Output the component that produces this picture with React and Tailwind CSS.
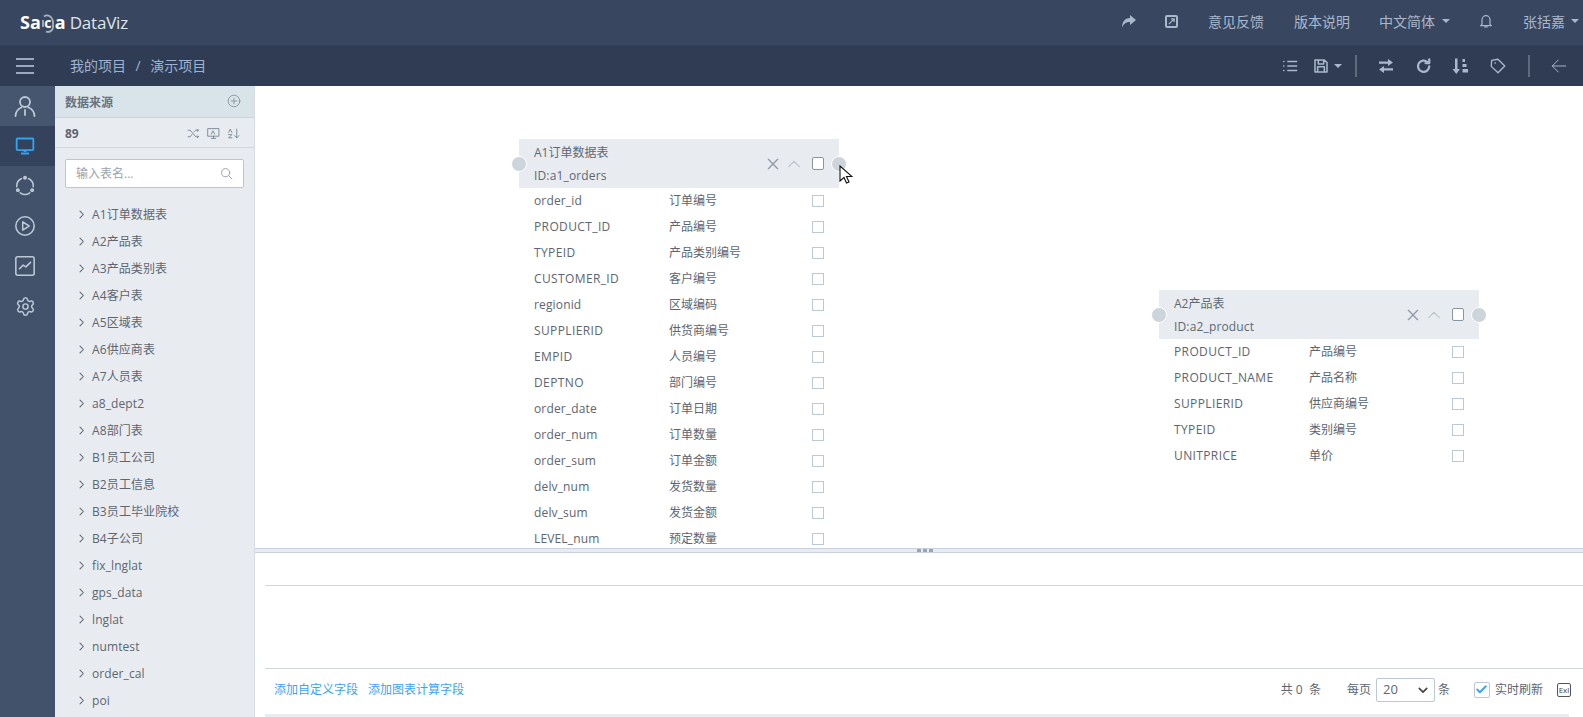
import React from "react";
import { Check, Settings } from "lucide-react";

const font = "font-['Open_Sans','Noto_Sans_CJK_SC',sans-serif]";
const tables = ["A1订单数据表","A2产品表","A3产品类别表","A4客户表","A5区域表","A6供应商表","A7人员表","a8_dept2","A8部门表","B1员工公司","B2员工信息","B3员工毕业院校","B4子公司","fix_lnglat","gps_data","lnglat","numtest","order_cal","poi"];
const a1 = [["order_id","订单编号"],["PRODUCT_ID","产品编号"],["TYPEID","产品类别编号"],["CUSTOMER_ID","客户编号"],["regionid","区域编码"],["SUPPLIERID","供货商编号"],["EMPID","人员编号"],["DEPTNO","部门编号"],["order_date","订单日期"],["order_num","订单数量"],["order_sum","订单金额"],["delv_num","发货数量"],["delv_sum","发货金额"],["LEVEL_num","预定数量"]];
const a2 = [["PRODUCT_ID","产品编号"],["PRODUCT_NAME","产品名称"],["SUPPLIERID","供应商编号"],["TYPEID","类别编号"],["UNITPRICE","单价"]];

const I = ({ s = 16, c = "", children, vb = "0 0 24 24", w = 1.8 }) => (
  <svg width={s} height={s} viewBox={vb} fill="none" stroke="currentColor" strokeWidth={w} strokeLinecap="round" strokeLinejoin="round" className={`shrink-0 ${c}`}>{children}</svg>
);
const Caret = ({ c = "border-t-[#a9b8cc]" }) => <span className={`inline-block w-0 h-0 border-x-[4px] border-x-transparent border-t-[4px] ${c}`} />;

function Card({ title, id, rows, className }) {
  return (
    <div className={`absolute w-[320px] ${className}`}>
      <div className="relative h-[49px] bg-[#e8ecf1] pl-[15px] pr-[15px] flex items-center justify-between">
        <span className="absolute left-[-7px] top-[17px] w-[14px] h-[14px] rounded-full bg-[#cdd4dc] border border-white box-content -ml-px" />
        <span className="absolute right-[-7px] top-[17px] w-[14px] h-[14px] rounded-full bg-[#cdd4dc] border border-white box-content -mr-px" />
        <div className="text-[12px] leading-[23px] text-[#5d6875]">
          <div>{title}</div>
          <div className="tracking-[0.15px]">{id}</div>
        </div>
        <div className="flex items-center text-[#8f9aa8]">
          <I s={16} w={2} c="mr-[5px]"><path d="M5 5l14 14M19 5L5 19" /></I>
          <I s={16} w={1.7} c="mr-[10px] text-[#b8c2cc]"><path d="M4 16l8-8 8 8" /></I>
          <span className="w-[12px] h-[13px] border border-[#8a95a2] bg-white rounded-[2px]" />
        </div>
      </div>
      {rows.map(([a, b]) => (
        <div key={a} className="h-[26px] pl-[15px] pr-[15px] flex items-center text-[12px] text-[#5d6570]">
          <span className={`w-[135px] ${/[a-z]/.test(a) ? "tracking-[0.15px]" : "tracking-[0.38px]"}`}>{a}</span>
          <span className="flex-1">{b}</span>
          <span className="w-[12px] h-[12px] border border-[#bcc8d4] bg-white" />
        </div>
      ))}
    </div>
  );
}

export default function App() {
  return (
    <div className={`${font} w-[1583px] h-[717px] overflow-hidden flex flex-col bg-white text-[12px]`}>
      <header className="h-[46px] shrink-0 bg-[#38475f] flex items-center pl-[20px] pb-[3px] text-[#a9b8cc] border-b border-[#323f55]">
        <div className="flex items-center text-white mt-[3px]">
          <span className="text-[18px] font-bold flex items-center">Sa
            <span className="relative inline-flex w-[14px] h-[20px] items-center justify-center">
              <svg width="14" height="20" viewBox="0 0 14 20" fill="none" stroke="#aab2bc" strokeWidth="1.800" className="absolute inset-0"><path d="M3 3.500A6 7 0 0 1 12 8v6a5 5 0 0 1-7 4.500" /><path d="M2 7v7" /></svg>
              <span className="relative text-[14px] leading-none">c</span>
            </span>a</span>
          <span className="ml-[4px] text-[17px] text-[#dfe5ee] tracking-[-0.2px]">DataViz</span>
        </div>
        <div className="ml-auto flex items-center text-[14px] pr-[4px]">
          <svg width="15" height="13" viewBox="0 0 15 13" fill="#a9b8cc" className="mr-[29px]"><path d="M9 0l6 5-6 5V7C5 7 3 8.500 1 12.500 1 7 4 3 9 3z" /></svg>
          <span className="mr-[30px] w-[13px] h-[13px] border-2 border-[#a9b8cc] rounded-[2px] flex items-center justify-center">
            <svg width="7" height="7" viewBox="0 0 8 8" stroke="#a9b8cc" strokeWidth="1.500" fill="none"><path d="M1 7l6-6M3.500 1H7v3.500" /></svg>
          </span>
          <span className="mr-[30px]">意见反馈</span>
          <span className="mr-[29px]">版本说明</span>
          <span className="mr-[28px] flex items-center gap-[7px]">中文简体 <Caret /></span>
          <I s={16} c="mr-[29px]" w={1.800}><path d="M6 17V10a6 6 0 0 1 12 0v7l2 2H4zM10 21h4" /></I>
          <span className="flex items-center gap-[6px] whitespace-nowrap">张括嘉 <Caret /></span>
        </div>
      </header>
      <div className="h-[40px] shrink-0 bg-[#2f3c53] flex items-center text-[#a9b8cc]">
        <div className="w-[55px] flex justify-center pr-[5px]">
          <div className="w-[18px] flex flex-col gap-[5px]"><i className="h-[2px] bg-[#9aa9bd]" /><i className="h-[2px] bg-[#9aa9bd]" /><i className="h-[2px] bg-[#9aa9bd]" /></div>
        </div>
        <div className="ml-[15px] pb-[2px] text-[14px] text-[#9fb2d0]">我的项目<span className="mx-[9.5px]">/</span>演示项目</div>
        <div className="ml-auto flex items-center pr-[15px]">
          <I s={18} w={1.700} c="mr-[14px]"><path d="M9 6h12M9 12h12M9 18h12M3.500 6h.5M3.500 12h.5M3.500 18h.5" /></I>
          <I s={16} w={2.300} c="mr-[5px]"><path d="M3 3h14l4 4v14H3zM8 3v6h8V3M7 21v-8h10v8" /></I>
          <Caret />
          <span className="ml-[13px] w-[2px] h-[22px] bg-[#5f6b7c]" />
          <svg width="18" height="18" viewBox="0 0 18 18" fill="#a9b8cc" className="ml-[20px] shrink-0"><path d="M2 4.500h9V2l5 3.500-5 3.500V6.800H2zM16 11.200H7V9l-5 3.500L7 16v-2.500h9z" /></svg>
          <I s={18} w={3} c="ml-[20px]"><path d="M19 12.500a7.500 7.500 0 1 1-2.500-5.800M19 3v5h-5" /></I>
          <svg width="18" height="18" viewBox="0 0 18 18" fill="#a9b8cc" className="ml-[18px] shrink-0"><path d="M4 1.500h2.500V12H9l-3.700 5L1.500 12H4zM11.500 2h2.500v3h-2.500zM11.500 7h4v3h-4zM11.500 12h5.500v3.500h-5.500z" /></svg>
          <I s={18} w={1.800} c="ml-[20px]"><path d="M3.500 4.500L12 3l9 9-9 9-9-8.500zM8 8h.5" /></I>
          <span className="ml-[21px] w-[2px] h-[22px] bg-[#5f6b7c]" />
          <I s={18} w={1.300} c="ml-[20px]"><path d="M21 12H3M11 4l-8 8 8 8" /></I>
        </div>
      </div>
      <div className="flex-1 flex min-h-0">
        <nav className="w-[55px] shrink-0 bg-[#42526a] flex flex-col text-[#bcc8d6]">
          <div className="h-[40px] flex items-center justify-center pr-[5px] bg-[#46566f]"><I s={24} w={1.800}><circle cx="12" cy="8" r="5" /><path d="M2.500 22a9.500 9.500 0 0 1 6-8.500M21.500 22a9.500 9.500 0 0 0-6-8.500M12 16v5" /></I></div>
          <div className="h-[40px] flex items-center justify-center pr-[5px] bg-[#34435b] text-[#2fa4f5]"><I s={20} w={2.200}><rect x="2" y="3" width="20" height="14" rx="1" /><path d="M8 21h8M11 18h2" /></I></div>
          <div className="h-[40px] flex items-center justify-center pr-[5px]"><I s={22} w={1.700}><path d="M15.800 3.840A9 9 0 0 1 20.970 12.780M8.200 3.840A9 9 0 0 0 3.030 12.780M17.200 19.400A9 9 0 0 1 6.800 19.400" /><circle cx="12" cy="3" r="1.300" fill="currentColor" /><circle cx="4.200" cy="16.500" r="1.300" fill="currentColor" /><circle cx="19.800" cy="16.500" r="1.300" fill="currentColor" /></I></div>
          <div className="h-[40px] flex items-center justify-center pr-[5px]"><I s={22} w={1.700}><circle cx="12" cy="12" r="10" /><path d="M9.500 7.500l7 4.500-7 4.500z" /></I></div>
          <div className="h-[40px] flex items-center justify-center pr-[5px]"><I s={22} w={1.700}><rect x="2" y="2" width="20" height="20" rx="2" /><path d="M6 15l4-4 3 2 5-5" /></I></div>
          <div className="h-[40px] flex items-center justify-center pr-[5px]"><Settings size={21} strokeWidth={1.700} /></div>
        </nav>
        <aside className="w-[200px] shrink-0 bg-[#e8ecf1] border-r border-[#d5dbe3] overflow-hidden">
          <div className="h-[32px] bg-[#d9e4ea] border-b border-[#cbd3dc] flex items-center justify-between pt-[2px] pl-[10px] pr-[13px] text-[#69727d] font-semibold text-[12px]">
            <span>数据来源</span>
            <I s={14} w={1.300} c="mb-[3px] text-[#7b8692]"><circle cx="12" cy="12" r="10" /><path d="M12 7v10M7 12h10" /></I>
          </div>
          <div className="h-[30px] border-b border-[#d2d8e0] flex items-center justify-between pt-[2px] pl-[10px] pr-[14px] text-[#5d6570]">
            <span className="font-bold text-[12px]">89</span>
            <span className="flex items-center gap-[7px] text-[#6e7a88]">
              <I s={13} w={1.500}><path d="M2 6h4l10 12h5M2 18h4l3-4M13 9l3-3h5M19 4l2 2-2 2M19 16l2 2-2 2" /></I>
              <I s={13} w={1.500}><rect x="2" y="3" width="20" height="14" /><path d="M8 21h8M12 17v4M8 13l3-6 3 6" /></I>
              <I s={13} w={1.500}><path d="M18 4v16M14 16l4 4 4-4M3 10l3-6 3 6M3 14h6l-6 6h6" /></I>
            </span>
          </div>
          <div className="pl-[10px] pr-[10px] pt-[11px]">
            <div className="h-[29px] bg-white border border-[#bcc6d0] rounded-[2px] flex items-center justify-between pl-[10px] pr-[10px] text-[#9aa3ad]">
              <span>输入表名...</span>
              <I s={13} w={1.800}><circle cx="10.500" cy="10.500" r="7.500" /><path d="M16 16l6 6" /></I>
            </div>
          </div>
          <ul className="pt-[13px]">
            {tables.map((t) => (
              <li key={t} className="h-[27px] flex items-center pl-[22px] text-[#5d6570] text-[12px] tracking-[0.1px]">
                <I s={9} w={2.800} c="mr-[6px]"><path d="M8 3l9 9-9 9" /></I>
                {t}
              </li>
            ))}
          </ul>
        </aside>
        <main className="flex-1 min-w-0 flex flex-col">
          <div className="relative h-[462px] shrink-0 overflow-hidden">
            <Card title="A1订单数据表" id="ID:a1_orders" rows={a1} className="left-[264px] top-[53px]" />
            <svg width="14" height="20" viewBox="0 0 14 20" className="absolute left-[584px] top-[79px] z-10"><path d="M1 1v15l4-3.500 2.500 5.500 2.500-1-2.500-5.500H13z" fill="#fff" stroke="#111" strokeWidth="1.100" /></svg>
            <Card title="A2产品表" id="ID:a2_product" rows={a2} className="left-[904px] top-[204px]" />
          </div>
          <div className="relative h-[5px] shrink-0 bg-[#e8ecf1] border-y border-[#c9d2dc]">
            <span className="absolute left-[662px] top-0 flex gap-[2px]"><i className="w-[4px] h-[3px] bg-[#98a5b4]" /><i className="w-[4px] h-[3px] bg-[#98a5b4]" /><i className="w-[4px] h-[3px] bg-[#98a5b4]" /></span>
          </div>
          <div className="flex-1 pl-[10px] flex flex-col">
            <div className="h-[33px] shrink-0 border-b border-[#cfd6de]" />
            <div className="h-[83px] shrink-0 border-b border-[#cfd6de]" />
            <div className="h-[45px] shrink-0 flex items-center text-[12px] pl-[9px] pr-[12px] pb-[4px]">
              <span className="text-[#3aa5ef] mr-[10px]">添加自定义字段</span>
              <span className="text-[#3aa5ef]">添加图表计算字段</span>
              <div className="ml-auto flex items-center text-[#5d6570]">
                <span className="mr-[26px]">共 0 &nbsp;条</span>
                <span className="mr-[5px]">每页</span>
                <span className="w-[59px] h-[24px] border border-[#bcc8d4] rounded-[2px] flex items-center justify-between pl-[6px] pr-[6px] text-[13px]">20
                  <I s={10} w={4} c="text-[#444]"><path d="M3 8l9 9 9-9" /></I>
                </span>
                <span className="ml-[3px] mr-[24px]">条</span>
                <span className="w-[16px] h-[16px] border border-[#bcc8d4] rounded-[2px] flex items-center justify-center mr-[5px]"><Check size={13} strokeWidth={3.500} color="#3aa5ef" /></span>
                <span className="mr-[14px]">实时刷新</span>
                <span className="w-[14px] h-[14px] border border-[#555] rounded-[2px] flex items-center justify-center text-[8px] leading-none text-[#444]">Exl</span>
              </div>
            </div>
            <div className="h-[3px] w-[1304px] bg-[#e8ecf1] rounded-t-[1px]" />
          </div>
        </main>
      </div>
    </div>
  );
}
